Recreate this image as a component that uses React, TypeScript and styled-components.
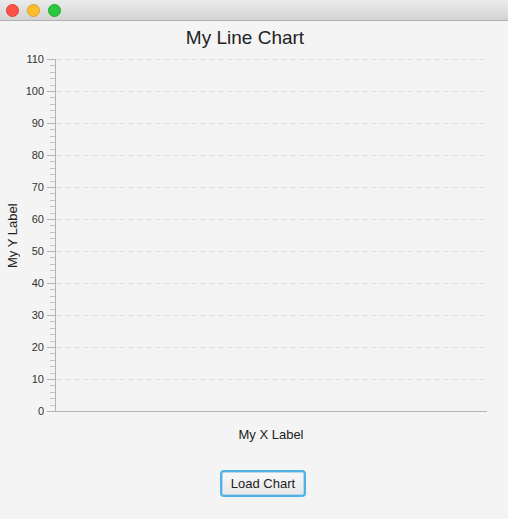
import React from "react";
import styled, { createGlobalStyle } from "styled-components";

const GlobalStyle = createGlobalStyle`
  html, body {
    margin: 0;
    padding: 0;
    background: #f4f4f4;
    font-family: "Liberation Sans", Arial, sans-serif;
  }
`;

const Window = styled.div`
  width: 508px;
  height: 519px;
  display: flex;
  flex-direction: column;
  background: #f4f4f4;
  overflow: hidden;
`;

const TitleBar = styled.div`
  height: 20px;
  display: flex;
  align-items: center;
  gap: 8px;
  padding-left: 6px;
  background: linear-gradient(#ebebeb, #d3d3d3);
  border-bottom: 1px solid #b1b1b1;
`;

const Light = styled.span<{ $fill: string; $edge: string }>`
  width: 11px;
  height: 11px;
  border-radius: 50%;
  background: ${(p) => p.$fill};
  border: 0.5px solid ${(p) => p.$edge};
`;

const Title = styled.div`
  width: 490px;
  padding-top: 8px;
  height: 18px;
  padding-bottom: 5px;
  text-align: center;
  font-size: 19px;
  line-height: 18px;
  color: #1f1f1f;
`;

const ChartRow = styled.div`
  display: flex;
  height: 366px;
`;

const YLabel = styled.div`
  width: 24px;
  display: flex;
  align-items: center;
  justify-content: center;
  writing-mode: vertical-rl;
  transform: rotate(180deg);
  font-size: 13px;
  color: #222;
  padding-bottom: 1px;
`;

const XLabel = styled.div`
  margin-top: 10px;
  margin-left: 55px;
  width: 432px;
  text-align: center;
  font-size: 13px;
  line-height: 14px;
  color: #222;
`;

const ButtonRow = styled.div`
  margin-top: 28px;
  padding-left: 220px;
  display: flex;
`;

const LoadButton = styled.button`
  width: 86px;
  height: 27px;
  padding: 0;
  border: 2px solid #4fb1e6;
  border-radius: 4px;
  background: linear-gradient(#f8f8f8, #e8e8e8);
  box-shadow: inset 0 0 0 1px #b8d6e8;
  font-family: "Liberation Sans", Arial, sans-serif;
  font-size: 13px;
  color: #222;
`;

const TOP = 59;
const BOTTOM = 411;
const LEFT = 55.5;
const RIGHT = 487;
const STEP = (BOTTOM - TOP) / 11;

const Chart = () => {
  const majors = Array.from({ length: 12 }, (_, i) => i * 10);
  const minors: number[] = [];
  for (let i = 0; i < 11; i++) {
    for (let k = 1; k < 5; k++) minors.push(i * 10 + k * 2);
  }
  const yOf = (v: number) => BOTTOM - (v / 10) * STEP;

  return (
    <svg width={466} height={366} viewBox="24 52 466 366">
      {majors.slice(1).map((v) => (
        <line
          key={"g" + v}
          x1={LEFT + 1}
          x2={RIGHT}
          y1={Math.round(yOf(v)) + 0.5}
          y2={Math.round(yOf(v)) + 0.5}
          stroke="#dcdcdc"
          strokeDasharray="5 4"
        />
      ))}
      {minors.map((v) => (
        <line
          key={"m" + v}
          x1={50}
          x2={LEFT}
          y1={Math.round(yOf(v)) + 0.5}
          y2={Math.round(yOf(v)) + 0.5}
          stroke="#c4c4c4"
        />
      ))}
      {majors.map((v) => (
        <g key={"t" + v}>
          <line
            x1={47}
            x2={LEFT}
            y1={Math.round(yOf(v)) + 0.5}
            y2={Math.round(yOf(v)) + 0.5}
            stroke="#b4b4b4"
          />
          <text
            x={44}
            y={Math.round(yOf(v)) + 4}
            textAnchor="end"
            fontSize={11}
            fill="#333"
            fontFamily='"Liberation Sans", Arial, sans-serif'
          >
            {v}
          </text>
        </g>
      ))}
      <line x1={LEFT} x2={LEFT} y1={TOP} y2={BOTTOM + 1} stroke="#b4b4b4" />
      <line x1={LEFT} x2={RIGHT} y1={BOTTOM + 0.5} y2={BOTTOM + 0.5} stroke="#b4b4b4" />
    </svg>
  );
};

export default function App() {
  return (
    <>
      <GlobalStyle />
      <Window>
        <TitleBar>
          <Light $fill="#fc5147" $edge="#df3e33" />
          <Light $fill="#fdbd2e" $edge="#dea123" />
          <Light $fill="#28c93f" $edge="#1daa2c" />
        </TitleBar>
        <Title>My Line Chart</Title>
        <ChartRow>
          <YLabel>My Y Label</YLabel>
          <Chart />
        </ChartRow>
        <XLabel>My X Label</XLabel>
        <ButtonRow>
          <LoadButton>Load Chart</LoadButton>
        </ButtonRow>
      </Window>
    </>
  );
}
